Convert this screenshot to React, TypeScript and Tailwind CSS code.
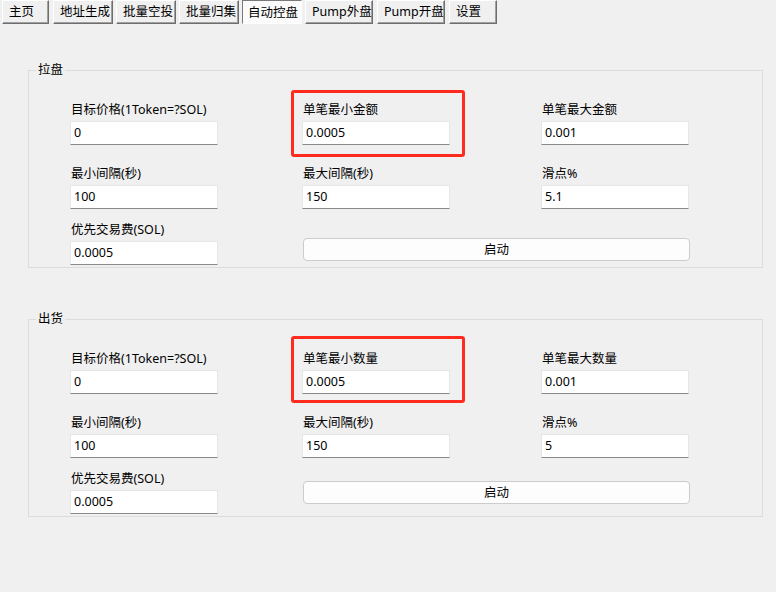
import React from 'react';

const tabs = [
  { label: '主页', w: 'w-[47px]', ml: 'ml-[2px]' },
  { label: '地址生成', w: 'w-[60px]', ml: 'ml-[4px]' },
  { label: '批量空投', w: 'w-[60px]', ml: 'ml-[3px]' },
  { label: '批量归集', w: 'w-[60px]', ml: 'ml-[3px]' },
  { label: '自动控盘', w: 'w-[60px]', ml: 'ml-[3px]', active: true },
  { label: 'Pump外盘', w: 'w-[68px]', ml: 'ml-[3px]' },
  { label: 'Pump开盘', w: 'w-[68px]', ml: 'ml-[4px]' },
  { label: '设置', w: 'w-[48px]', ml: 'ml-[4px]' },
];

function Field({ label, value }: { label: string; value: string }) {
  return (
    <div>
      <div className="h-[16px] leading-[16px] text-[12.5px] text-black pl-[1px]">{label}</div>
      <div className="mt-[3px] w-[148px] h-[24px] bg-white border border-[#e6e6e6] border-b-[#8a8a8a] pl-[3px] leading-[22px] text-[12.5px] text-black">
        {value}
      </div>
    </div>
  );
}

function Group({
  title,
  fields,
  btnPad,
  redTop,
}: {
  title: string;
  fields: [string, string][];
  btnPad: string;
  redTop: string;
}) {
  return (
    <fieldset className="relative mx-[28px] w-[735px] border border-[#dcdcdc] px-0 pb-[2px]">
      <legend className="ml-[7px] px-[2px] text-[12.5px] leading-[16px] text-black">{title}</legend>
      <div className="grid grid-cols-[232px_239px_150px] pl-[41px] pt-[24px]">
        <Field label={fields[0][0]} value={fields[0][1]} />
        <Field label={fields[1][0]} value={fields[1][1]} />
        <Field label={fields[2][0]} value={fields[2][1]} />
        <div className="col-span-3 h-[21px]" />
        <Field label={fields[3][0]} value={fields[3][1]} />
        <Field label={fields[4][0]} value={fields[4][1]} />
        <Field label={fields[5][0]} value={fields[5][1]} />
        <div className="col-span-3 h-[13px]" />
        <Field label={fields[6][0]} value={fields[6][1]} />
        <div className={`col-span-2 ${btnPad}`}>
          <button className="ml-[1px] w-[387px] h-[23px] rounded-[4px] border border-[#cccccc] bg-[#fdfdfd] text-[12.5px] text-black leading-[21px]">
            启动
          </button>
        </div>
      </div>
      <div className={`absolute left-[262px] ${redTop} w-[174px] h-[67px] border-[3px] border-[#ff2b1f] rounded-[3px] pointer-events-none`} />
    </fieldset>
  );
}

export default function App() {
  return (
    <div
      className="w-[776px] h-[592px] bg-[#f0f0f0] overflow-hidden"
      style={{ fontFamily: '"Noto Sans", "Noto Sans CJK SC", sans-serif' }}
    >
      <div className="flex h-[25px]">
        {tabs.map(t => (
          <div
            key={t.label}
            className={`${t.w} ${t.ml} h-[24px] text-[12.5px] leading-[22px] text-black ${
              t.active
                ? 'bg-[#fbfbfb] border border-t-[#7a7a7a] border-l-[#7a7a7a] border-r-[#ffffff] border-b-[#ffffff] pl-[5px] pt-[1px]'
                : 'bg-[#f0f0f0] border border-t-[#ffffff] border-l-[#ffffff] border-r-[#6e6e6e] border-b-[#6e6e6e] shadow-[inset_-1px_-1px_0_#a0a0a0] pl-[6px]'
            }`}
          >
            {t.label}
          </div>
        ))}
      </div>
      <div className="pt-[37px]">
        <Group
          title="拉盘"
          btnPad="pt-[14px]"
          redTop="top-[12px]"
          fields={[
            ['目标价格(1Token=?SOL)', '0'],
            ['单笔最小金额', '0.0005'],
            ['单笔最大金额', '0.001'],
            ['最小间隔(秒)', '100'],
            ['最大间隔(秒)', '150'],
            ['滑点%', '5.1'],
            ['优先交易费(SOL)', '0.0005'],
          ]}
        />
      </div>
      <div className="pt-[43px]">
        <Group
          title="出货"
          btnPad="pt-[8px]"
          redTop="top-[9px]"
          fields={[
            ['目标价格(1Token=?SOL)', '0'],
            ['单笔最小数量', '0.0005'],
            ['单笔最大数量', '0.001'],
            ['最小间隔(秒)', '100'],
            ['最大间隔(秒)', '150'],
            ['滑点%', '5'],
            ['优先交易费(SOL)', '0.0005'],
          ]}
        />
      </div>
    </div>
  );
}
